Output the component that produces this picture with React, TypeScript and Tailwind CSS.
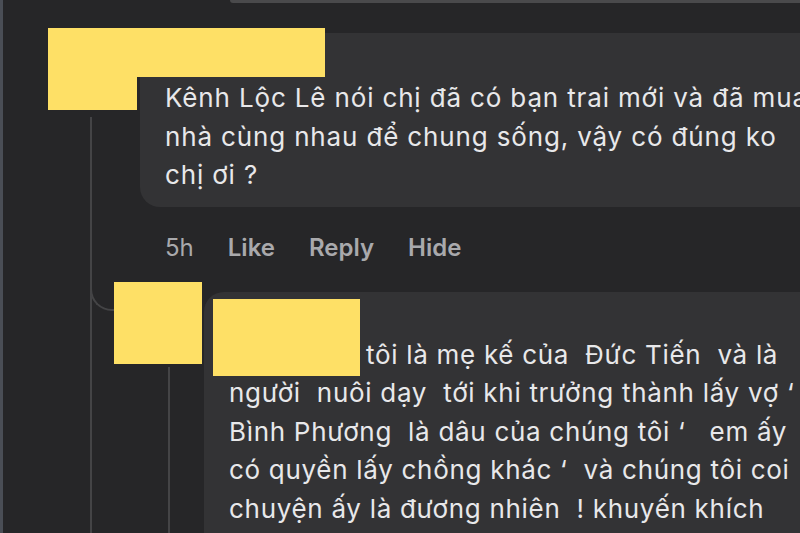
export default function App() {
  return (
    <div className="flex h-[533px] w-[800px] overflow-hidden bg-[#262628] font-['Inter',sans-serif] text-[#e8e8ea]">
      <div className="w-[3px] shrink-0 bg-[#4a4e56]" />
      <div className="relative flex min-w-0 flex-1 flex-col">
        <div className="ml-[227px] h-[3px] shrink-0 rounded-bl-[10px] bg-[#4a4a4c]" />

        {/* comment */}
        <div className="mt-[30px] flex shrink-0">
          <div className="flex w-[137px] shrink-0 flex-col">
            <div className="h-[84px]" />
            <div className="ml-[87px] w-[2px] flex-1 bg-[#444446]" />
          </div>
          <div className="flex shrink-0 flex-col">
            <div className="w-[700px] whitespace-pre rounded-[20px] bg-[#333335] pb-[12px] pl-[25px] pt-[46px] text-[26px] leading-[38.5px] tracking-[0.85px]">
              <div>Kênh Lộc Lê nói chị đã có bạn trai mới và đã mua</div>
              <div>nhà cùng nhau để chung sống, vậy có đúng ko</div>
              <div>chị ơi ?</div>
            </div>
            <div className="flex gap-[34px] pl-[25px] pt-[25px] text-[24px] leading-[32px] text-[#a9a9ac]">
              <span>5h</span>
              <span className="font-semibold">Like</span>
              <span className="font-semibold">Reply</span>
              <span className="font-semibold">Hide</span>
            </div>
          </div>
        </div>

        {/* reply */}
        <div className="flex flex-1">
          <div className="w-[89px] shrink-0 border-r-2 border-[#444446]" />
          <div className="-ml-[2px] h-[47px] w-[24px] shrink-0 rounded-bl-[22px] border-b-2 border-l-2 border-[#444446]" />
          <div className="flex shrink-0 flex-col pt-[18px]">
            <div className="h-[82px] w-[88px] bg-[#fee066]" />
            <div className="ml-[54px] mt-[3px] w-[2px] flex-1 bg-[#444446]" />
          </div>
          <div className="ml-[2px] mt-[28px] w-[700px] shrink-0 whitespace-pre rounded-tl-[20px] bg-[#333335] pl-[25px] pt-[44px] text-[26px] leading-[38.5px] tracking-[0.7px]">
            <div>
              <span className="inline-block w-[137px]" />
              tôi là mẹ kế của  Đức Tiến  và là
            </div>
            <div>người  nuôi dạy  tới khi trưởng thành lấy vợ ‘</div>
            <div>Bình Phương  là dâu của chúng tôi ‘   em ấy</div>
            <div>có quyền lấy chồng khác ‘  và chúng tôi coi</div>
            <div>chuyện ấy là đương nhiên  ! khuyến khích</div>
          </div>
        </div>

        {/* redactions */}
        <div className="absolute left-[45px] top-[28px] h-[49px] w-[277px] bg-[#fee066]" />
        <div className="absolute left-[45px] top-[28px] h-[82px] w-[89px] bg-[#fee066]" />
        <div className="absolute left-[210px] top-[299px] h-[77px] w-[147px] bg-[#fee066]" />
      </div>
    </div>
  );
}
